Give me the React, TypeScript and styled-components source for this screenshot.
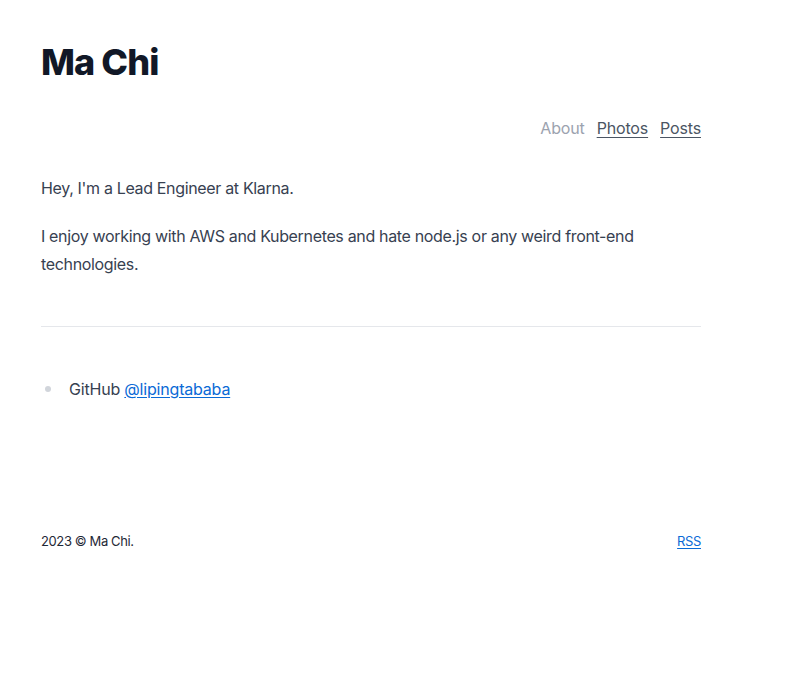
import React from "react";
import styled, { createGlobalStyle } from "styled-components";

const Global = createGlobalStyle`
  html, body { margin: 0; padding: 0; background: #ffffff; }
  body { font-family: Inter, "Noto Sans", sans-serif; color: #374151; -webkit-font-smoothing: antialiased; }
`;

const Page = styled.div`
  width: 660px;
  padding: 42px 0 0 41px;
`;

const Title = styled.h1`
  margin: 0;
  font-size: 36px;
  line-height: 40px;
  font-weight: 800;
  letter-spacing: -0.025em;
  color: #111827;
`;

const Nav = styled.nav`
  display: flex;
  justify-content: flex-end;
  gap: 12px;
  margin-top: 34px;
  font-size: 16px;
  line-height: 24px;
  letter-spacing: -0.01em;
`;

const NavLink = styled.a<{ $active?: boolean }>`
  color: ${(p) => (p.$active ? "#9ca3af" : "#4b5563")};
  text-decoration: ${(p) => (p.$active ? "none" : "underline")};
  text-underline-offset: 3px;
  cursor: pointer;
`;

const Prose = styled.main`
  margin-top: 34px;
  font-size: 16px;
  line-height: 28px;
  letter-spacing: -0.021em;
`;

const P = styled.p`
  margin: 0 0 20px;
`;

const Rule = styled.hr`
  border: 0;
  border-top: 1px solid #e5e7eb;
  margin: 48px 0 48px;
`;

const List = styled.ul`
  margin: 0;
  padding: 0;
  list-style: none;
  letter-spacing: -0.012em;
`;

const Item = styled.li`
  display: flex;
  align-items: center;
`;

const Bullet = styled.span`
  width: 6px;
  height: 6px;
  border-radius: 50%;
  background: #d1d5db;
  margin: 0 18px 0 4px;
  flex-shrink: 0;
`;

const Link = styled.a`
  color: #0a6ad6;
  text-decoration: underline;
  text-underline-offset: 2px;
`;

const Footer = styled.footer`
  display: flex;
  justify-content: space-between;
  align-items: center;
  margin-top: 128px;
  font-size: 13px;
  line-height: 20px;
  letter-spacing: -0.03em;
  color: #1f2937;
`;

const FootLink = styled.a`
  color: #0a6ad6;
  text-decoration: underline;
  text-underline-offset: 2px;
`;

export default function App() {
  return (
    <>
      <Global />
      <Page>
        <Title>Ma Chi</Title>
        <Nav>
          <NavLink $active>About</NavLink>
          <NavLink>Photos</NavLink>
          <NavLink>Posts</NavLink>
        </Nav>
        <Prose>
          <P>Hey, I'm a Lead Engineer at Klarna.</P>
          <P>
            I enjoy working with AWS and Kubernetes and hate node.js or any weird front-end
            technologies.
          </P>
          <Rule />
          <List>
            <Item>
              <Bullet />
              <span>
                GitHub <Link>@lipingtababa</Link>
              </span>
            </Item>
          </List>
        </Prose>
        <Footer>
          <span>2023 © Ma Chi.</span>
          <FootLink>RSS</FootLink>
        </Footer>
      </Page>
    </>
  );
}
